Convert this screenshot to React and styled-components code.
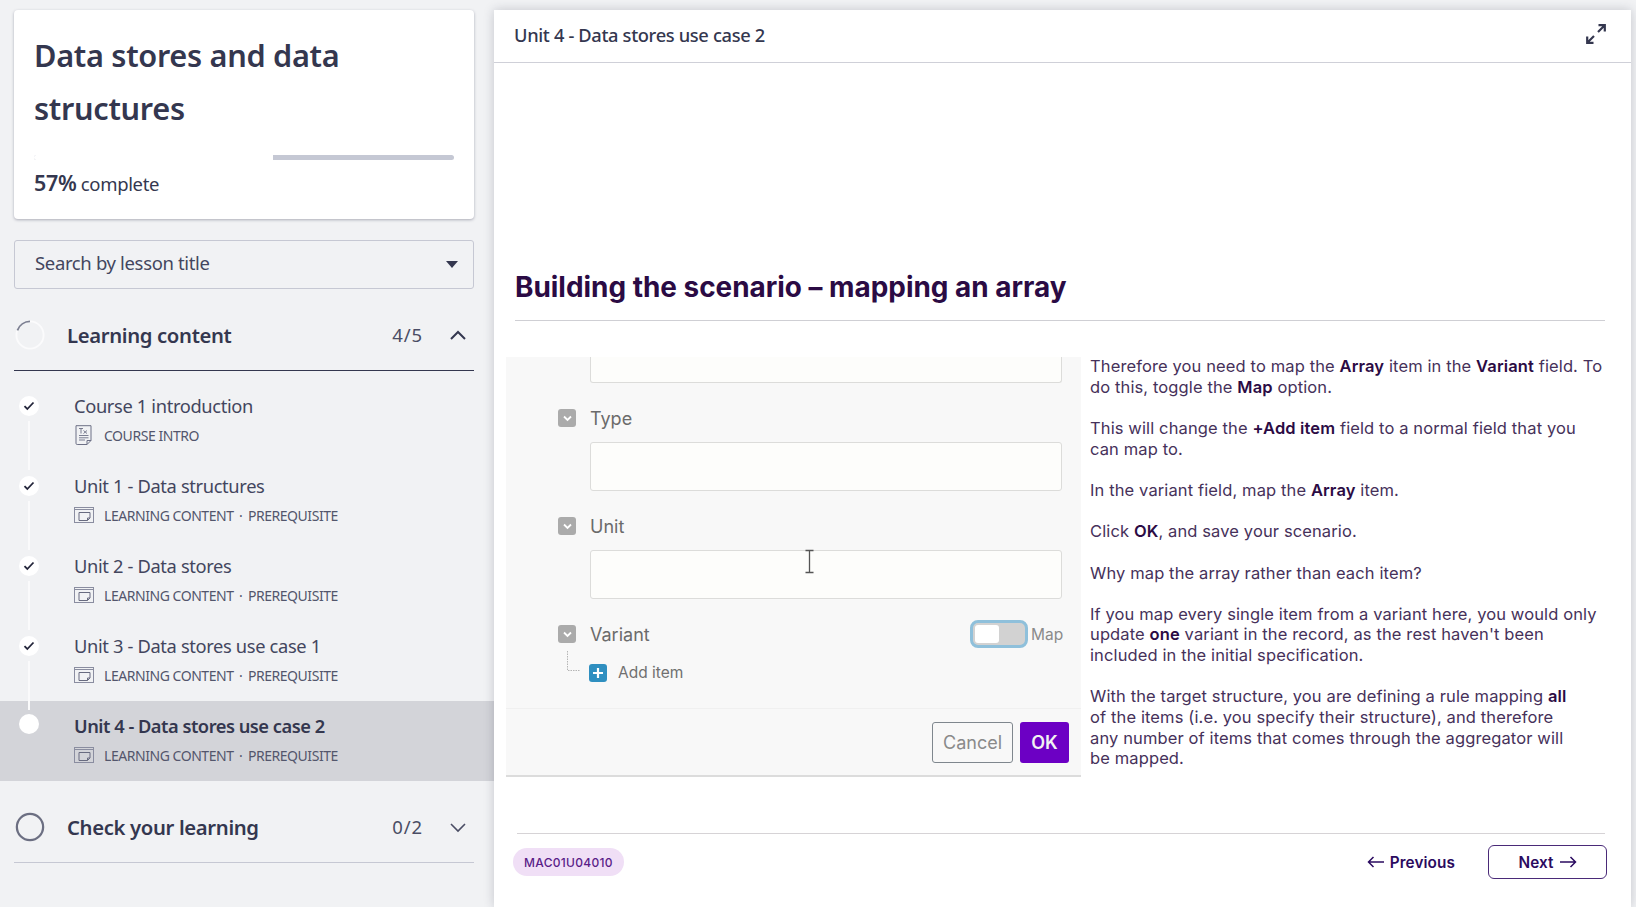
import React from "react";
import styled, { createGlobalStyle } from "styled-components";

const Global = createGlobalStyle`
  html, body { margin: 0; padding: 0; background: #f1f2f4; }
  * { box-sizing: border-box; }
  body { overflow: hidden; }
`;
const sans = `"Noto Sans", "Open Sans", sans-serif`;
const ink = "#34374f";

const Page = styled.div`
  width: 1636px; height: 907px; display: flex; background: #f1f2f4; overflow: hidden;
  font-family: ${sans}; color: ${ink};
`;
const Sidebar = styled.aside`
  width: 494px; flex: none; padding-top: 10px; display: flex; flex-direction: column;
`;
const Inset = styled.div`
  margin: 0 20px 0 14px;
`;
const CourseCard = styled.div`
  height: 209px; background: #fff; border-radius: 4px; padding: 19px 20px 0 20px;
  box-shadow: 0 1px 3px rgba(40, 44, 70, .35);
`;
const CourseTitle = styled.h1`
  margin: 0; font-size: 30.7px; line-height: 53px; font-weight: 600; color: ${ink}; letter-spacing: -0.3px;
`;
const Progress = styled.div`
  margin-top: 20px; height: 5px; border-radius: 3px; background: #c5c8d4; overflow: hidden;
`;
const ProgressFill = styled.div`
  height: 100%; background: #fff;
`;
const Complete = styled.div`
  margin-top: 10px; font-size: 18.5px; line-height: 26px; letter-spacing: -0.35px;
  b { font-size: 21.5px; font-weight: 600; }
`;
const SelectBox = styled.div`
  height: 49px; margin-top: 21px; border: 1px solid #c6c8d3; border-radius: 3px;
  display: flex; align-items: center; justify-content: space-between; padding: 0 15px 4px 20px;
  font-size: 18.5px; letter-spacing: -0.35px; color: #43465e;
`;
const Caret = styled.span`
  width: 0; height: 0; margin-top: 4px; border-left: 6px solid transparent; border-right: 6px solid transparent;
  border-top: 7px solid ${ink};
`;
const SectionHead = styled.div`
  height: 82px; padding: 10px 0 0 1px; display: flex; align-items: center;
  border-bottom: 1px solid ${p => p.$strong ? ink : "#c6c8d3"};
`;
const SectionRing = styled.svg`
  width: 30px; height: 30px; flex: none; margin-right: 22px;
`;
const SectionName = styled.div`
  flex: 1; font-size: 20.3px; font-weight: 600; letter-spacing: -0.35px; color: ${ink};
`;
const SectionCount = styled.div`
  font-size: 18.5px; color: #4a4d64; margin-right: 26px; letter-spacing: 0.9px;
`;
const Chevron = styled.svg`
  width: 18px; height: 12px; margin-right: 7px; flex: none;
`;
const ItemList = styled.div`
  margin-top: 10px; display: flex; flex-direction: column;
`;
const Item = styled.div`
  height: 80px; display: flex; padding-left: 19px;
  background: ${p => p.$active ? "#d3d4d9" : "transparent"};
`;
const Marker = styled.div`
  width: 20px; flex: none; display: flex; flex-direction: column; align-items: center;
  padding-top: ${p => p.$active ? 13 : 15}px; margin-right: 35px;
`;
const Dot = styled.div`
  width: 20px; height: 20px; flex: none; border-radius: 50%; background: #fff;
  display: flex; align-items: center; justify-content: center;
`;
const Connector = styled.div`
  position: relative; width: 2px; height: 49px; flex: none; margin-top: 5px; background: #fafafb;
`;
const ItemBody = styled.div`
  padding-top: 12px;
`;
const ItemTitle = styled.div`
  font-size: 18.3px; line-height: 26px; letter-spacing: ${p => p.$active ? "-0.5px" : "-0.35px"};
  font-weight: ${p => p.$active ? 600 : 400};
  color: ${p => p.$active ? "#34374f" : "#43465e"}; white-space: nowrap;
`;
const ItemMeta = styled.div`
  margin-top: 4px; height: 24px; display: flex; align-items: center; font-size: 14px;
  letter-spacing: -0.45px; color: #53566c; white-space: nowrap;
  svg { width: 20px; height: 20px; flex: none; margin-right: 10px; }
`;
const MetaDot = styled.span`
  margin: 0 5.5px;
`;
const Main = styled.main`
  width: 1137px; height: 897px; flex: none; margin-top: 10px; background: #fff;
  box-shadow: 0 0 10px rgba(40, 44, 70, .22); display: flex; flex-direction: column;
`;
const MainHead = styled.header`
  height: 53px; flex: none; border-bottom: 1px solid #cfd0d8; display: flex; align-items: center;
  justify-content: space-between; padding: 0 24px 4px 20px;
  font-size: 18.3px; font-weight: 500; letter-spacing: -0.35px; color: ${ink};
  svg { width: 20px; height: 20px; margin-right: 1px; }
`;
const Content = styled.div`
  flex: 1; padding: 0 26px 0 21px; display: flex; flex-direction: column;
  font-family: Inter, sans-serif; color: #46315a;
`;
const Heading = styled.h2`
  margin: 202px 0 0 0; height: 56px; font-size: 27.9px; line-height: 44px; font-weight: 700;
  color: #2b0b44; border-bottom: 1px solid #cfcfd4;
`;
const Columns = styled.div`
  margin-top: 36px; display: flex; margin-left: -9px; height: 420px;
`;
const Shot = styled.div`
  width: 575px; flex: none; height: 420px; background: #f8f8f8; border-bottom: 2px solid #dcdcdc;
  display: flex; flex-direction: column; font-family: Inter, sans-serif; color: #6b6b6b;
  font-size: 18px;
`;
const ShotBody = styled.div`
  flex: 1; padding: 0 19px 0 52px; display: flex; flex-direction: column;
`;
const ShotInput = styled.div`
  height: ${p => p.$h}px; margin: ${p => p.$cut ? 0 : 12}px 0 0 32px; flex: none; background: #fdfdfb;
  border: 1px solid #dcdcda;
  border-radius: ${p => p.$cut ? "0 0 3px 3px" : "3px"}; ${p => p.$cut ? "border-top: none;" : ""}
`;
const IBeam = styled.svg`
  display: block; width: 11px; height: 25px; margin: -2px 0 0 213px;
`;
const ShotRow = styled.div`
  height: 24px; margin-top: ${p => p.$mt}px; flex: none; display: flex; align-items: center;
`;
const ShotCheck = styled.div`
  width: 18px; height: 18px; flex: none; margin-right: 14px; background: #ababab; border-radius: 3px;
  display: flex; align-items: center; justify-content: center;
`;
const ShotLabel = styled.span`
  flex: 1;
`;
const Toggle = styled.div`
  width: 58px; height: 28px; border: 3px solid #8fc0db; border-radius: 8px; background: #d2d2d2;
  padding: 2px; display: flex;
`;
const ToggleKnob = styled.div`
  width: 24px; background: #fff; border-radius: 3px;
`;
const MapText = styled.span`
  margin-left: 3px; font-size: 15.5px; color: #8a8a8a; width: 31px;
`;
const AddRow = styled.div`
  margin-top: 17px; margin-left: 9px; display: flex; align-items: center; font-size: 15.5px; color: #707070;
  svg { flex: none; }
`;
const TreeLine = styled.svg`
  overflow: visible; margin-right: 8px;
`;
const PlusBox = styled.svg`
  margin-right: 11px;
`;
const ShotFoot = styled.div`
  height: 67px; flex: none; border-top: 1px solid #f0f0f0; display: flex; justify-content: flex-end;
  align-items: flex-start; padding: 13px 12px 0 0; gap: 7px;
`;
const Cancel = styled.div`
  width: 81px; height: 41px; border: 1px solid #7f878e; border-radius: 3px; display: flex; align-items: center;
  justify-content: center; color: #8a8a8a; font-size: 18px;
`;
const Ok = styled.div`
  width: 49px; height: 41px; background: #6c00c4; border-radius: 3px; color: #f2f2f2; font-weight: 600;
  display: flex; align-items: center; justify-content: center; font-size: 18px;
`;
const Copy = styled.div`
  margin: -1px 0 0 9px; width: 520px; font-size: 16.5px; line-height: 20.65px; letter-spacing: .12px; color: #46315a;
  p { margin: 0 0 20.65px; }
  b { font-weight: 600; color: #2b0b44; }
`;
const Footer = styled.div`
  margin-top: 56px; border-top: 1px solid #d6d3d6; margin-left: 2px; height: 48px;
  display: flex; align-items: center; justify-content: space-between;
`;
const Badge = styled.div`
  margin-left: -4px; margin-top: 9px; width: 111px; height: 28px; border-radius: 14px; background: #f0dff6; color: #5a1c88;
  font-size: 12px; font-weight: 500; display: flex; align-items: center; justify-content: center; letter-spacing: .3px;
`;
const Nav = styled.div`
  margin-top: 9px; display: flex; align-items: center; margin-right: -2px;
`;
const PrevBtn = styled.div`
  display: flex; align-items: center; gap: 6px; font-size: 15.3px; font-weight: 600; letter-spacing: .1px; color: #2b0b60; margin-right: 33px;
`;
const NextBtn = styled.div`
  width: 119px; height: 34px; border: 1.5px solid #4a2a78; border-radius: 6px; display: flex; align-items: center;
  justify-content: center; gap: 6px; font-size: 15.3px; font-weight: 600; letter-spacing: .1px; color: #2b0b60;
`;

const Check = () => (
  <svg width="12" height="10" viewBox="0 0 12 10"><path d="M1.5 5.2 4.3 8 10.5 1.5" fill="none" stroke="#23253a" strokeWidth="1.8" /></svg>
);
const DocIcon = () => (
  <svg viewBox="0 0 20 20" fill="none" stroke="#6d7086" strokeWidth="1">
    <path d="M2 .7h15v14.8l-4 4H3.200A1.200 1.200 0 0 1 2 18.300z" />
    <path d="M13 19.500v-4h4" />
    <path d="M5 3.500h4M7 3.500v5M9.500 5.500l3.500 3M13 5.500l-3.500 3M5 10.500h9.500M5 12.800h9.500M5 15h6" strokeWidth=".9" />
  </svg>
);
const SlideIcon = () => (
  <svg viewBox="0 0 20 20" fill="none" stroke="#8a8da0" strokeWidth="1">
    <rect x=".5" y="2.500" width="19" height="15" />
    <path d="M.5 4.500h19" />
    <path d="M5 7.500h11v5.500l-2.500 2.500H5zM13.500 15.500v-2.500H16" stroke="#686b80" />
  </svg>
);
const items = [
  { t: "Course 1 introduction", m: ["COURSE INTRO"], doc: true },
  { t: "Unit 1 - Data structures", m: ["LEARNING CONTENT", "PREREQUISITE"] },
  { t: "Unit 2 - Data stores", m: ["LEARNING CONTENT", "PREREQUISITE"] },
  { t: "Unit 3 - Data stores use case 1", m: ["LEARNING CONTENT", "PREREQUISITE"] },
  { t: "Unit 4 - Data stores use case 2", m: ["LEARNING CONTENT", "PREREQUISITE"], active: true },
];
const CheckArrow = () => (
  <svg width="11" height="11" viewBox="0 0 11 11"><path d="M2 3.500 5.500 7 9 3.500" fill="none" stroke="#fff" strokeWidth="1.8" /></svg>
);
const Arrow = ({ left }) => (
  <svg width="17" height="12" viewBox="0 0 17 12" style={left ? { transform: "scaleX(-1)" } : undefined}>
    <path d="M0 6h15.500M10.500 1l5 5-5 5" fill="none" stroke="#2b0b60" strokeWidth="1.500" />
  </svg>
);

export default function App() {
  return (
    <Page>
      <Global />
      <Sidebar>
        <Inset>
          <CourseCard>
            <CourseTitle>Data stores and data<br />structures</CourseTitle>
            <Progress><ProgressFill style={{ width: "57%" }} /></Progress>
            <Complete><b>57%</b> complete</Complete>
          </CourseCard>
          <SelectBox>Search by lesson title<Caret /></SelectBox>
          <SectionHead $strong>
            <SectionRing viewBox="0 0 32 32">
              <circle cx="16" cy="16" r="14.500" fill="none" stroke="#fbfbfc" strokeWidth="2" />
              <path d="M2.600 11A14.500 14.500 0 0 1 16 1.500" fill="none" stroke="#7d8092" strokeWidth="2" />
            </SectionRing>
            <SectionName>Learning content</SectionName>
            <SectionCount>4/5</SectionCount>
            <Chevron viewBox="0 0 18 12"><path d="M2 10 9 3l7 7" fill="none" stroke={ink} strokeWidth="2" /></Chevron>
          </SectionHead>
        </Inset>
        <ItemList>
          {items.map((it) => (
            <Item key={it.t} $active={it.active}>
              <Marker $active={it.active}>
                <Dot>{!it.active && <Check />}</Dot>
                {!it.active && <Connector />}
              </Marker>
              <ItemBody>
                <ItemTitle $active={it.active}>{it.t}</ItemTitle>
                <ItemMeta>
                  {it.doc ? <DocIcon /> : <SlideIcon />}
                  {it.m[0]}
                  {it.m[1] && <><MetaDot>·</MetaDot>{it.m[1]}</>}
                </ItemMeta>
              </ItemBody>
            </Item>
          ))}
        </ItemList>
        <Inset>
          <SectionHead>
            <SectionRing viewBox="0 0 32 32">
              <circle cx="16" cy="16" r="14" fill="none" stroke="#6c6f82" strokeWidth="2.400" />
            </SectionRing>
            <SectionName>Check your learning</SectionName>
            <SectionCount>0/2</SectionCount>
            <Chevron viewBox="0 0 18 12"><path d="M2 3l7 7 7-7" fill="none" stroke="#4a4d64" strokeWidth="1.600" /></Chevron>
          </SectionHead>
        </Inset>
      </Sidebar>
      <Main>
        <MainHead>
          Unit 4 - Data stores use case 2
          <svg viewBox="0 0 20 20" fill="none" stroke={ink} strokeWidth="2.200">
            <path d="M12 8l6.500-6.500M12.500 1.200h6.300v6.300M8 12l-6.500 6.500M1.200 12.500v6.300h6.300" />
          </svg>
        </MainHead>
        <Content>
          <Heading>Building the scenario – mapping an array</Heading>
          <Columns>
            <Shot>
              <ShotBody>
                <ShotInput $h={26} $cut />
                <ShotRow $mt={23}><ShotCheck><CheckArrow /></ShotCheck><ShotLabel>Type</ShotLabel></ShotRow>
                <ShotInput $h={49} />
                <ShotRow $mt={23}><ShotCheck><CheckArrow /></ShotCheck><ShotLabel>Unit</ShotLabel></ShotRow>
                <ShotInput $h={49}>
                  <IBeam viewBox="0 0 11 25">
                    <path d="M1.500 1.500h8M5.500 1.500v22M1.500 23.500h8" fill="none" stroke="#555" strokeWidth="1.300" />
                  </IBeam>
                </ShotInput>
                <ShotRow $mt={23}>
                  <ShotCheck><CheckArrow /></ShotCheck><ShotLabel>Variant</ShotLabel>
                  <Toggle><ToggleKnob /></Toggle><MapText>Map</MapText>
                </ShotRow>
                <AddRow>
                  <TreeLine width="14" height="18" viewBox="0 0 14 18">
                    <path d="M.5-13V6.500H13" fill="none" stroke="#b5b5b5" strokeWidth="1" strokeDasharray="1.500 1" />
                  </TreeLine>
                  <PlusBox width="18" height="18" viewBox="0 0 18 18">
                    <rect width="18" height="18" rx="3" fill="#2f8fc0" />
                    <path d="M9 4v10M4 9h10" stroke="#fff" strokeWidth="2.200" />
                  </PlusBox>
                  Add item
                </AddRow>
              </ShotBody>
              <ShotFoot>
                <Cancel>Cancel</Cancel>
                <Ok>OK</Ok>
              </ShotFoot>
            </Shot>
            <Copy>
              <p>Therefore you need to map the <b>Array</b> item in the <b>Variant</b> field. To do this, toggle the <b>Map</b> option.</p>
              <p>This will change the <b>+Add item</b> field to a normal field that you<br />can map to.</p>
              <p>In the variant field, map the <b>Array</b> item.</p>
              <p>Click <b>OK</b>, and save your scenario.</p>
              <p>Why map the array rather than each item?</p>
              <p>If you map every single item from a variant here, you would only<br />update <b>one</b> variant in the record, as the rest haven't been<br />included in the initial specification.</p>
              <p>With the target structure, you are defining a rule mapping <b>all</b><br />of the items (i.e. you specify their structure), and therefore<br />any number of items that comes through the aggregator will<br />be mapped.</p>
            </Copy>
          </Columns>
          <Footer>
            <Badge>MAC01U04010</Badge>
            <Nav>
              <PrevBtn><Arrow left />Previous</PrevBtn>
              <NextBtn>Next<Arrow /></NextBtn>
            </Nav>
          </Footer>
        </Content>
      </Main>
    </Page>
  );
}
